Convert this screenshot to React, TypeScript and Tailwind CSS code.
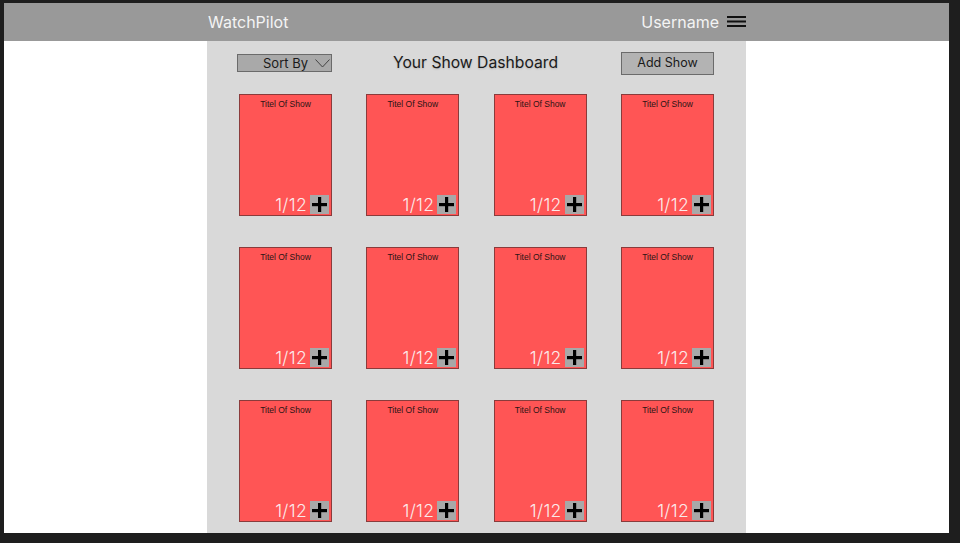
import React from "react";

const shows = Array.from({ length: 12 }, (_, i) => ({ id: i, title: "Titel Of Show", progress: "1/12" }));

function PlusBox() {
  return (
    <div className="flex h-[19px] w-[19px] items-center justify-center bg-[#a8a8a8]">
      <svg width="15" height="15" viewBox="0 0 15 15">
        <rect x="6" y="0" width="3.2" height="15" fill="#000" />
        <rect x="0" y="6" width="15" height="3.2" fill="#000" />
      </svg>
    </div>
  );
}

function ShowCard({ title, progress }: { title: string; progress: string }) {
  return (
    <div className="relative flex h-[122px] w-[93px] flex-col border border-[#8a3b3b] bg-[#ff5555]">
      <div className="pt-[4px] text-center text-[8.5px] leading-[10px] text-[#2b1414] [font-family:'Liberation_Sans',Arial,sans-serif]">
        {title}
      </div>
      <div className="mt-auto flex items-end justify-end gap-[3px] pb-[1px] pr-[2px]">
        <span className="text-[17.5px] leading-[19px] font-light tracking-[0.3px] text-[#fbeaea] [font-family:Inter,sans-serif]">{progress}</span>
        <PlusBox />
      </div>
    </div>
  );
}

export default function App() {
  return (
    <div className="h-[543px] w-[960px] overflow-hidden bg-[#1e1e1e] pl-[4px] pt-[3px] [font-family:Inter,sans-serif]">
      <div className="flex h-[530px] w-[945px] flex-col">
        <header className="flex h-[38px] items-center justify-between bg-[#999999] pl-[204px] pr-[203px]">
          <span className="text-[16px] text-[#f4f4f4]">WatchPilot</span>
          <div className="flex items-center gap-[8px]">
            <span className="text-[16px] text-[#f4f4f4]">Username</span>
            <svg width="19" height="12" viewBox="0 0 19 12">
              <rect x="0" y="0" width="19" height="2" fill="#111" />
              <rect x="0" y="4.5" width="19" height="2" fill="#111" />
              <rect x="0" y="9" width="19" height="2" fill="#111" />
            </svg>
          </div>
        </header>
        <main className="flex-1 bg-white">
          <section className="ml-[203px] h-full w-[539px] bg-[#d9d9d9] px-[32px] pt-[10px]">
            <div className="flex h-[24px] items-center justify-between">
              <button className="-ml-[2px] flex h-[18px] w-[95px] items-center border border-[#6b6b6b] bg-[#a9a9a9] pl-[25px] text-[13px] leading-none text-[#1a1a1a]">
                <span>Sort By</span>
                <svg className="ml-[7px]" width="15" height="9" viewBox="0 0 15 9">
                  <polyline points="0.5,0.5 7.5,8 14.5,0.5" fill="none" stroke="#444" strokeWidth="1" />
                </svg>
              </button>
              <h1 className="-ml-[2px] text-[15.7px] text-[#1a1a1a] [text-shadow:0_1px_2px_rgba(0,0,0,0.15)]">Your Show Dashboard</h1>
              <button className="h-[23px] w-[93px] border border-[#6b6b6b] bg-[#b3b3b3] text-[12.5px] leading-none text-[#1a1a1a]">
                Add Show
              </button>
            </div>
            <div className="mt-[19px] grid grid-cols-[repeat(4,93px)] justify-between gap-y-[31px]">
              {shows.map((s) => (
                <ShowCard key={s.id} title={s.title} progress={s.progress} />
              ))}
            </div>
          </section>
        </main>
      </div>
    </div>
  );
}
